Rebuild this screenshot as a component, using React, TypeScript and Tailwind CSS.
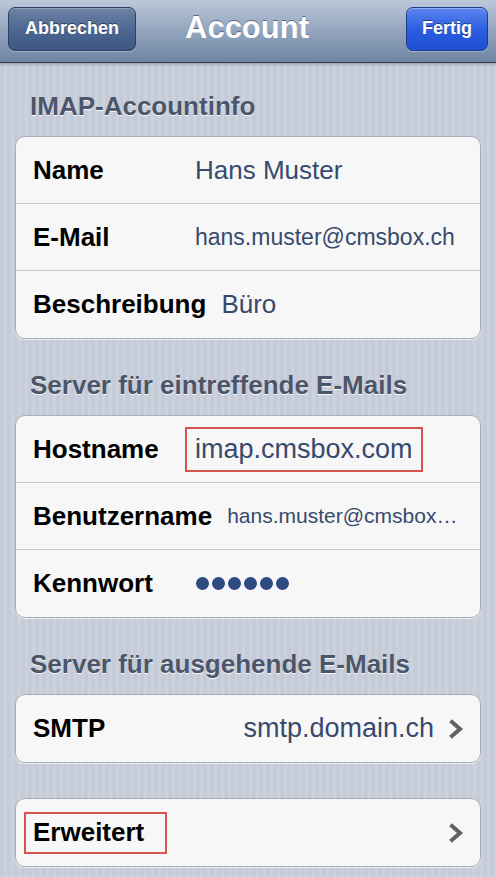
import React from "react";

interface Row {
  label: string;
  value?: React.ReactNode;
  valueClass?: string;
  chevron?: boolean;
  marked?: "label" | "value";
  alignRight?: boolean;
}

interface Section {
  title?: string;
  rows: Row[];
}

const sections: Section[] = [
  {
    title: "IMAP-Accountinfo",
    rows: [
      { label: "Name", value: "Hans Muster" },
      { label: "E-Mail", value: "hans.muster@cmsbox.ch", valueClass: "text-[23px]" },
      { label: "Beschreibung", value: "Büro" },
    ],
  },
  {
    title: "Server für eintreffende E-Mails",
    rows: [
      { label: "Hostname", value: "imap.cmsbox.com", marked: "value", valueClass: "text-[27px]" },
      { label: "Benutzername", value: "hans.muster@cmsbox…", valueClass: "text-[21px]" },
      { label: "Kennwort", value: "password" },
    ],
  },
  {
    title: "Server für ausgehende E-Mails",
    rows: [
      {
        label: "SMTP",
        value: "smtp.domain.ch",
        valueClass: "text-[27px]",
        chevron: true,
        alignRight: true,
      },
    ],
  },
  {
    rows: [{ label: "Erweitert", chevron: true, marked: "label" }],
  },
];

const Chevron = () => (
  <svg width="16" height="20" viewBox="0 0 16 20" className="ml-[14px] shrink-0">
    <polyline
      points="4,3 12,10 4,17"
      fill="none"
      stroke="#5f6368"
      strokeWidth="4"
      strokeLinecap="square"
      strokeLinejoin="miter"
    />
  </svg>
);

const PasswordDots = () => (
  <span className="flex items-center gap-[3px] pl-[1px]">
    {[0, 1, 2, 3, 4, 5].map((i) => (
      <span key={i} className="w-[13px] h-[13px] rounded-full bg-[#2d4a80]" />
    ))}
  </span>
);

const NavButton = ({ label, primary }: { label: string; primary?: boolean }) => (
  <button
    className={
      primary
        ? "h-[44px] px-[15px] rounded-[7px] border border-[#1d3c8e] bg-[linear-gradient(#5a86ef,#2a5bde_55%,#1f4fd2)] shadow-[inset_0_1px_0_rgba(255,255,255,0.35),0_1px_0_rgba(255,255,255,0.3)] text-white text-[18px] font-bold [text-shadow:0_-1px_0_rgba(0,0,0,0.45)]"
        : "h-[44px] px-[16px] rounded-[7px] border border-[#2c3f5f] bg-[linear-gradient(#6c83a5,#4c6590_55%,#3d5784)] shadow-[inset_0_1px_0_rgba(255,255,255,0.25),0_1px_0_rgba(255,255,255,0.3)] text-white text-[18px] font-bold [text-shadow:0_-1px_0_rgba(0,0,0,0.45)]"
    }
  >
    {label}
  </button>
);

export default function App() {
  return (
    <div className="min-h-[877px] w-full font-['Liberation_Sans',Arial,sans-serif] bg-[repeating-linear-gradient(90deg,#c5cbd7_0px,#c5cbd7_4px,#ccd2dd_4px,#ccd2dd_7px)]">
      {/* navigation bar */}
      <div className="h-[63px] flex items-center justify-between px-[8px] pb-[5px] border-b border-[#2c3d57] bg-[linear-gradient(#bcc7d9,#93a5be_50%,#6f85a4)] shadow-[0_1px_3px_rgba(0,0,0,0.3)]">
        <NavButton label="Abbrechen" />
        <h1 className="text-[31px] font-bold text-white [text-shadow:0_-1px_0_rgba(40,55,80,0.6)] -ml-[48px]">
          Account
        </h1>
        <NavButton label="Fertig" primary />
      </div>

      <div className="px-[15px] pb-[12px]">
        {sections.map((section, si) => (
          <div key={si} className={si === 0 ? "mt-[21px]" : section.title ? "mt-[24px]" : "mt-[35px]"}>
            {section.title && (
              <div className="h-[44px] mb-[8px] flex items-center pl-[15px] text-[26px] font-bold text-[#4c566b] [text-shadow:0_1px_0_rgba(255,255,255,0.9)]">
                {section.title}
              </div>
            )}
            <div className="rounded-[10px] border border-[#a7adb7] bg-[#f7f7f7] shadow-[0_1px_0_rgba(255,255,255,0.7)] divide-y divide-[#c6c8cc] overflow-hidden">
              {section.rows.map((row) => (
                <div key={row.label} className="h-[67px] flex items-center pl-[17px] pr-[16px]">
                  <span
                    className={
                      row.marked === "label"
                        ? "-ml-[9px] pl-[7px] pr-[21px] h-[42px] flex items-center border-2 border-[#d9534f] text-[26px] font-bold text-black"
                        : "min-w-[147px] text-[26px] font-bold text-black whitespace-nowrap"
                    }
                  >
                    {row.label}
                  </span>
                  {row.value && (
                    <span
                      className={
                        "pl-[15px] text-[#374a6d] whitespace-nowrap " +
                        (row.alignRight ? "ml-auto " : "") +
                        (row.valueClass ?? "text-[26px]")
                      }
                    >
                      {row.value === "password" ? (
                        <PasswordDots />
                      ) : row.marked === "value" ? (
                        <span className="-ml-[10px] inline-flex items-center h-[45px] px-[8px] border-2 border-[#d9534f]">
                          {row.value}
                        </span>
                      ) : (
                        row.value
                      )}
                    </span>
                  )}
                  {row.chevron && (
                    <>
                      {!row.value && <span className="flex-1" />}
                      <Chevron />
                    </>
                  )}
                </div>
              ))}
            </div>
          </div>
        ))}
      </div>
    </div>
  );
}
